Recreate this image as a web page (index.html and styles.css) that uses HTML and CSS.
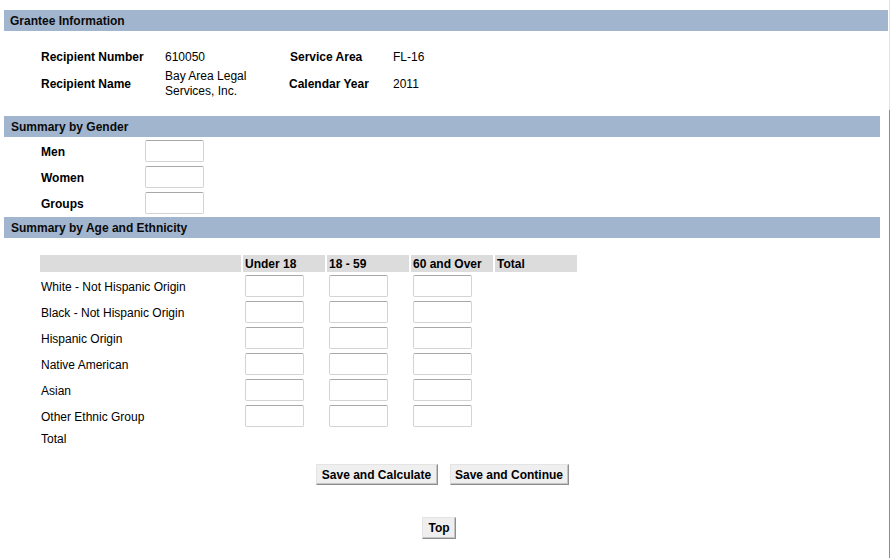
FILE: index.html
```html
<!DOCTYPE html>
<html>
<head>
<meta charset="utf-8">
<title>Grantee Information</title>
<link rel="stylesheet" href="styles.css">
</head>
<body>
<div class="page">
  <div class="main">
    <div class="bar bar-wide">Grantee Information</div>
    <div class="info">
      <div class="lbl">Recipient Number</div>
      <div class="val">610050</div>
      <div class="lbl lbl2">Service Area</div>
      <div class="val">FL-16</div>
      <div class="lbl row2">Recipient Name</div>
      <div class="val row2"><span class="name">Bay Area Legal Services, Inc.</span></div>
      <div class="lbl row2">Calendar Year</div>
      <div class="val row2">2011</div>
    </div>

    <div class="bar">Summary by Gender</div>
    <div class="gender">
      <div class="lbl">Men</div><input class="box" type="text">
      <div class="lbl">Women</div><input class="box" type="text">
      <div class="lbl">Groups</div><input class="box" type="text">
    </div>

    <div class="bar">Summary by Age and Ethnicity</div>
    <table class="age">
      <thead>
        <tr>
          <th class="c-first"></th>
          <th class="c-num">Under 18</th>
          <th class="c-num">18 - 59</th>
          <th class="c-num">60 and Over</th>
          <th class="c-num">Total</th>
        </tr>
      </thead>
      <tbody>
        <tr><td class="name-cell">White - Not Hispanic Origin</td><td><input class="box" type="text"></td><td><input class="box" type="text"></td><td><input class="box" type="text"></td><td></td></tr>
        <tr><td class="name-cell">Black - Not Hispanic Origin</td><td><input class="box" type="text"></td><td><input class="box" type="text"></td><td><input class="box" type="text"></td><td></td></tr>
        <tr><td class="name-cell">Hispanic Origin</td><td><input class="box" type="text"></td><td><input class="box" type="text"></td><td><input class="box" type="text"></td><td></td></tr>
        <tr><td class="name-cell">Native American</td><td><input class="box" type="text"></td><td><input class="box" type="text"></td><td><input class="box" type="text"></td><td></td></tr>
        <tr><td class="name-cell">Asian</td><td><input class="box" type="text"></td><td><input class="box" type="text"></td><td><input class="box" type="text"></td><td></td></tr>
        <tr><td class="name-cell">Other Ethnic Group</td><td><input class="box" type="text"></td><td><input class="box" type="text"></td><td><input class="box" type="text"></td><td></td></tr>
        <tr class="total-row"><td class="name-cell">Total</td><td></td><td></td><td></td><td></td></tr>
      </tbody>
    </table>

    <div class="actions">
      <button class="btn btn-calc" type="button">Save and Calculate</button>
      <button class="btn btn-cont" type="button">Save and Continue</button>
    </div>
    <div class="top-row">
      <button class="btn btn-top" type="button">Top</button>
    </div>
  </div>
  <div class="edge"></div>
</div>
</body>
</html>
```

FILE: styles.css
```css
html, body {
  margin: 0;
  padding: 0;
  background: #ffffff;
}

body {
  font-family: "Liberation Sans", Arial, sans-serif;
  font-size: 12px;
  color: #000000;
}

.page {
  display: flex;
  width: 890px;
  min-height: 558px;
}

.main {
  width: 889px;
  box-sizing: border-box;
  padding: 10px 0 0 4px;
}

.edge {
  width: 1px;
  background: linear-gradient(to bottom, #e3e3e3 0, #e3e3e3 110px, #8d8d8d 110px, #8d8d8d 100%);
}

.bar {
  width: 876px;
  height: 21px;
  box-sizing: border-box;
  background: #a2b5ce;
  font-weight: bold;
  line-height: 21px;
  padding-top: 1px;
  padding-left: 7px;
  color: #0a0a0a;
  overflow: hidden;
}

.bar-wide {
  width: 884px;
  padding-left: 6px;
}

/* Grantee information */
.info {
  display: grid;
  grid-template-columns: 124px 124px 104px auto;
  grid-template-rows: 22px 32px;
  align-items: center;
  padding: 15px 0 16px 37px;
}

.info .lbl {
  font-weight: bold;
}

.info .lbl2 {
  padding-left: 1px;
}

.info .name {
  display: block;
  max-width: 100px;
  line-height: 15px;
}

/* Gender */
.gender {
  display: grid;
  grid-template-columns: 104px 59px;
  grid-auto-rows: 26px;
  align-items: center;
  padding: 1px 0 1px 37px;
}

.gender .lbl {
  font-weight: bold;
  padding-top: 2px;
}

.box {
  display: block;
  width: 59px;
  height: 22px;
  box-sizing: border-box;
  margin: 0;
  padding: 0 3px;
  border: 1px solid #d3d3d3;
  border-top-color: #a8a8a8;
  border-radius: 2px;
  background: #ffffff;
  font-family: "Liberation Sans", Arial, sans-serif;
  font-size: 12px;
}

/* Age and ethnicity table */
.age {
  border-collapse: separate;
  border-spacing: 2px;
  margin: 15px 0 0 34px;
}

.age th {
  height: 17px;
  padding: 0 0 0 2px;
  background: #dcdcdc;
  font-weight: bold;
  text-align: left;
  vertical-align: middle;
  box-sizing: border-box;
}

.age th.c-first {
  width: 201px;
}

.age th.c-num {
  width: 82px;
}

.age td {
  height: 24px;
  padding: 0 0 0 2px;
  vertical-align: middle;
  box-sizing: border-box;
}

.age td.name-cell {
  padding: 2px 0 0 1px;
}

.age .total-row td {
  height: 16px;
}

/* Buttons */
.actions {
  width: 876px;
  display: flex;
  justify-content: center;
  gap: 12px;
  margin-top: 16px;
}

.btn {
  height: 21px;
  box-sizing: border-box;
  margin: 0;
  padding: 0;
  white-space: nowrap;
  font-family: "Liberation Sans", Arial, sans-serif;
  font-size: 12px;
  font-weight: bold;
  color: #000000;
  background: #efefef;
  border: 1px solid;
  border-color: #e4e4e4 #8e8e8e #8e8e8e #e4e4e4;
  box-shadow: inset -1px -1px 0 #c4c4c4;
  border-radius: 0;
  cursor: pointer;
}

.btn-calc {
  width: 122px;
}

.btn-cont {
  width: 119px;
}

.top-row {
  width: 870px;
  display: flex;
  justify-content: center;
  margin-top: 32px;
}

.btn-top {
  width: 34px;
  height: 22px;
}
```
